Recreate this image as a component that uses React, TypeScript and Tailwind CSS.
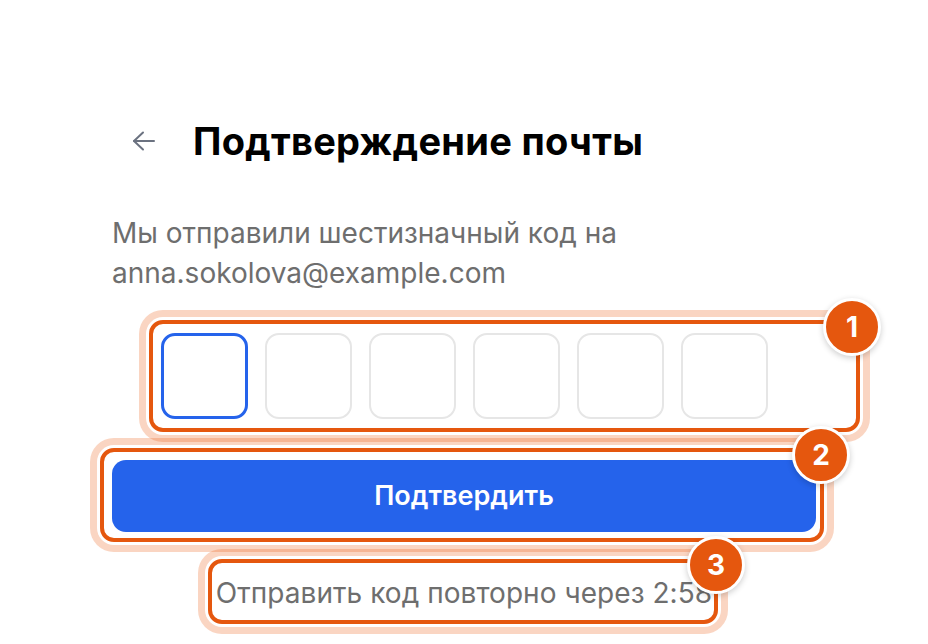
import React from "react";

const FONT = { fontFamily: "Inter, 'Noto Sans', sans-serif" };

type Mark = { n: number; box: [number, number, number, number]; badge: [number, number] };

// annotation overlays, page coordinates
const marks: Mark[] = [
  { n: 1, box: [149, 320, 711, 112], badge: [852, 327] },
  { n: 2, box: [100, 448, 724, 94], badge: [821, 455] },
  { n: 3, box: [208, 559, 510, 65], badge: [716, 565] },
];

function BackArrow() {
  return (
    <svg width="24" height="20" viewBox="0 0 24 20" fill="none" stroke="#6b7280" strokeWidth="2" strokeLinecap="round" strokeLinejoin="round">
      <path d="M22 10H2" />
      <path d="M11 1.5L2 10l9 8.5" />
    </svg>
  );
}

export default function App() {
  const digits = [0, 1, 2, 3, 4, 5];

  return (
    <div className="relative min-h-screen w-full overflow-hidden bg-white" style={FONT}>
      <div className="w-[704px] ml-[112px] pt-[117px]">
        {/* Header */}
        <div className="flex items-center h-[48px]">
          <button className="ml-[20px] w-[24px] h-[24px] flex items-center justify-center">
            <BackArrow />
          </button>
          <h1 className="ml-[37px] text-[38px] leading-[48px] font-bold text-black tracking-[0.3px]">
            Подтверждение почты
          </h1>
        </div>

        {/* Description */}
        <p className="mt-[48px] text-[28px] leading-[40px] text-[#6e6e6e]">
          Мы отправили шестизначный код на
          <br />
          anna.sokolova@example.com
        </p>

        {/* OTP */}
        <div className="mt-[40px] flex justify-center gap-[17px]">
          {digits.map((d) => (
            <input
              key={d}
              maxLength={1}
              className={
                d === 0
                  ? "w-[87px] h-[86px] rounded-[14px] border-[3px] border-[#2563eb] bg-white outline-none"
                  : "w-[87px] h-[86px] rounded-[14px] border-2 border-[#e6e6e6] bg-white outline-none"
              }
            />
          ))}
        </div>

        {/* Submit */}
        <button className="mt-[41px] w-full h-[72px] rounded-[14px] bg-[#2563eb] text-white text-[27px] font-semibold">
          Подтвердить
        </button>

        {/* Resend */}
        <p className="mt-[41px] text-center text-[28px] leading-[40px] tracking-[0.05px] text-[#6e6e6e]">
          Отправить код повторно через 2:58
        </p>
      </div>

      {/* Annotations */}
      {marks.map((m) => (
        <div
          key={"b" + m.n}
          className="absolute rounded-[14px] border-4 border-[#e5570e] shadow-[0_0_0_3px_#ffffff,0_0_0_10px_rgba(234,88,12,0.25)]"
          style={{ left: m.box[0], top: m.box[1], width: m.box[2], height: m.box[3] }}
        />
      ))}
      {marks.map((m) => (
        <div
          key={"n" + m.n}
          className="absolute w-[58px] h-[58px] rounded-full bg-[#e5570e] border-[3px] border-white shadow-[0_2px_6px_rgba(0,0,0,0.2)] flex items-center justify-center text-white text-[28px] font-bold"
          style={{ left: m.badge[0] - 29, top: m.badge[1] - 29 }}
        >
          {m.n}
        </div>
      ))}
    </div>
  );
}
